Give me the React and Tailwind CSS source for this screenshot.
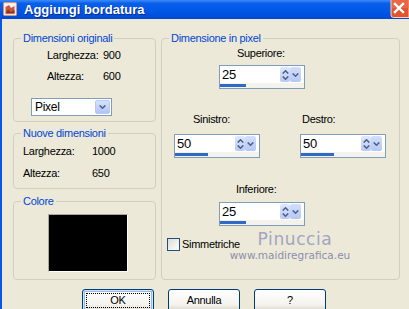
const ff = "font-['Liberation_Sans',Arial,sans-serif]";

function Chev({ up }) {
  return (
    <svg width="7" height="4" viewBox="0 0 7 4" className="block">
      <path
        d={up ? "M0.7 3.6 L3.5 0.8 L6.3 3.6" : "M0.7 0.4 L3.5 3.2 L6.3 0.4"}
        fill="none"
        stroke="#4d6185"
        strokeWidth="1.5"
      />
    </svg>
  );
}

function SpinInput({ value, barClass }) {
  return (
    <div className="w-[86px] h-[24px] border border-[#7f9db9] flex flex-col bg-white">
      <div className="h-[17px] flex items-stretch">
        <div className="flex-1 pl-[2px] text-[13px] leading-[17px] text-black">{value}</div>
        <div className="w-[10px] my-[1px] rounded-[2px] bg-[linear-gradient(to_bottom,#dfe8fc,#b7c9f4)] flex flex-col items-center justify-center gap-[2px]">
          <Chev up />
          <Chev />
        </div>
        <div className="w-[11px] my-[1px] mr-[3px] rounded-[2px] bg-[linear-gradient(to_bottom,#d3defb,#b4c7f5)] flex items-center justify-center">
          <Chev />
        </div>
      </div>
      <div className="h-[5px] bg-[#f3f2ec] pt-[1px]">
        <div className={"h-[3px] bg-[#316ac5] " + barClass} />
      </div>
    </div>
  );
}

function Group({ title, className, children }) {
  return (
    <fieldset className={"border border-[#d0d0bf] rounded-[4px] " + className}>
      <legend className="ml-[7px] px-[2px] text-[#0046d5] text-[11px] leading-[13px]">{title}</legend>
      {children}
    </fieldset>
  );
}

function TitleIcon() {
  return (
    <svg width="14" height="14" viewBox="0 0 14 14" className="block">
      <rect x="0.5" y="0.5" width="13" height="13" rx="1" fill="#f7e4dc" stroke="#c99a86" />
      <rect x="2" y="2" width="10" height="10" fill="#fdf4ee" />
      <path d="M2.5 11.5 L2.5 5 L6 3 L8 6 L11.5 4 L11.5 11.5 Z" fill="#c8573e" />
      <path d="M2.5 11.5 L5 7.5 L8 10 L11.5 8 L11.5 11.5 Z" fill="#8f3322" />
    </svg>
  );
}

function CloseButton() {
  return (
    <svg width="19" height="19" viewBox="0 0 19 19" className="block shrink-0">
      <path d="M1 -1 L1 15 Q1 17.5 3.5 17.5 L19 17.5 L19 -1 Z" fill="#e2542f" stroke="#f6d6ca" strokeWidth="1" />
      <path d="M2 0 L19 0 L19 8 L2 8 Z" fill="#ec7656" opacity="0.6" />
      <path d="M5 4 L13 12 M13 4 L5 12" stroke="#ffffff" strokeWidth="2.4" strokeLinecap="square" />
    </svg>
  );
}

export default function App() {
  return (
    <div className={"relative w-[409px] h-[309px] overflow-hidden bg-[#ece9d8] flex flex-col text-[11px] text-black tracking-[-0.3px] " + ff}>
      {/* Title bar */}
      <div className="w-[409px] h-[19px] shrink-0 flex items-start justify-between bg-[linear-gradient(to_bottom,#3a8cf8_0%,#0a5eea_18%,#0057e6_60%,#0049d4_100%)]">
        <div className="flex items-start">
          <div className="ml-[3px] mt-[2px] shrink-0">
            <TitleIcon />
          </div>
          <div className="ml-[7px] text-white font-bold text-[13px] leading-[19px] tracking-normal [text-shadow:1px_1px_0_#0c2a8c]">
            Aggiungi bordatura
          </div>
        </div>
        <CloseButton />
      </div>

      {/* Body */}
      <div className="flex-1 flex flex-col border-l-[2px] border-[#0a55e6] pl-[11px] pt-[13px]">
        <div className="flex gap-[5px] items-stretch">
          {/* Left column */}
          <div className="w-[143px] flex flex-col">
            <Group title="Dimensioni originali" className="pb-[5px]">
              <div className="flex flex-col pl-[33px]">
                <div className="mt-[4px] flex h-[13px] leading-[13px]">
                  <span className="w-[56px]">Larghezza:</span>
                  <span>900</span>
                </div>
                <div className="mt-[8px] flex h-[13px] leading-[13px]">
                  <span className="w-[56px]">Altezza:</span>
                  <span>600</span>
                </div>
              </div>
              <div className="mt-[15px] ml-[17px] w-[81px] h-[18px] border border-[#7f9db9] bg-white flex items-stretch">
                <div className="flex-1 pl-[3px] text-[12px] leading-[16px]">Pixel</div>
                <div className="w-[15px] my-[1px] mr-[1px] rounded-[2px] border border-[#b9c9ef] bg-[linear-gradient(to_bottom,#d6e1fb,#b0c4f4)] flex items-center justify-center">
                  <Chev />
                </div>
              </div>
            </Group>

            <Group title="Nuove dimensioni" className="mt-[5px] pb-[8px]">
              <div className="flex flex-col pl-[9px]">
                <div className="mt-[5px] flex h-[13px] leading-[13px]">
                  <span className="w-[69px]">Larghezza:</span>
                  <span>1000</span>
                </div>
                <div className="mt-[9px] flex h-[13px] leading-[13px]">
                  <span className="w-[69px]">Altezza:</span>
                  <span>650</span>
                </div>
              </div>
            </Group>

            <Group title="Colore" className="mt-[6px] pb-[7px]">
              <div className="mt-[6px] ml-[34px] w-[80px] h-[58px] bg-black border-t border-l border-[#aca899] border-r-white border-b-white border-r border-b" />
            </Group>
          </div>

          {/* Right group */}
          <Group title="Dimensione in pixel" className="w-[239px]">
            <div className="flex flex-col items-start">
              <div className="mt-[2px] ml-[75px] h-[13px] leading-[13px]">Superiore:</div>
              <div className="mt-[5px] ml-[57px]">
                <SpinInput value="25" barClass="w-[26px]" />
              </div>

              <div className="mt-[24px] flex">
                <div className="ml-[12px] flex flex-col items-start">
                  <div className="ml-[19px] h-[13px] leading-[13px]">Sinistro:</div>
                  <div className="mt-[8px]">
                    <SpinInput value="50" barClass="w-[33px]" />
                  </div>
                </div>
                <div className="ml-[40px] flex flex-col items-start">
                  <div className="ml-[2px] h-[13px] leading-[13px]">Destro:</div>
                  <div className="mt-[8px]">
                    <SpinInput value="50" barClass="w-[33px]" />
                  </div>
                </div>
              </div>

              <div className="mt-[25px] ml-[74px] h-[13px] leading-[13px]">Inferiore:</div>
              <div className="mt-[6px] ml-[57px]">
                <SpinInput value="25" barClass="w-[26px]" />
              </div>

              <div className="mt-[12px] ml-[5px] flex items-center">
                <div className="w-[13px] h-[13px] border border-[#1c5180] bg-[linear-gradient(135deg,#dcdcd5,#ffffff)]" />
                <span className="ml-[2px] leading-[13px]">Simmetriche</span>
              </div>
            </div>
          </Group>
        </div>

        {/* Buttons */}
        <div className="mt-[9px] ml-[69px] flex gap-[14px]">
          <button className="w-[72px] h-[23px] rounded-[3px] border border-[#003c74] bg-[linear-gradient(to_bottom,#ffffff,#f4f3ee_70%,#d9d4c8)] shadow-[inset_0_0_0_1px_#cee7ff,inset_0_0_0_2px_#98b8ea] p-[3px] flex">
            <span className="flex-1 border border-dotted border-black flex items-center justify-center text-[11px] leading-[13px]">OK</span>
          </button>
          <button className="w-[72px] h-[23px] rounded-[3px] border border-[#003c74] bg-[linear-gradient(to_bottom,#ffffff,#f4f3ee_70%,#d9d4c8)] flex items-center justify-center text-[11px] leading-[13px]">
            Annulla
          </button>
          <button className="w-[72px] h-[23px] rounded-[3px] border border-[#003c74] bg-[linear-gradient(to_bottom,#ffffff,#f4f3ee_70%,#d9d4c8)] flex items-center justify-center text-[11px] leading-[13px]">
            ?
          </button>
        </div>
      </div>

      {/* Watermark overlay */}
      <div className="absolute left-[226px] top-[229px] w-[128px] flex flex-col items-center pointer-events-none font-['DejaVu_Sans',sans-serif] tracking-normal">
        <div className="ml-[10px] text-[17px] leading-[20px] tracking-[0.6px] text-[#a4a4c4]">Pinuccia</div>
        <div className="text-[10.5px] leading-[13px] text-[#8e8eac]">www.maidiregrafica.eu</div>
      </div>
    </div>
  );
}
